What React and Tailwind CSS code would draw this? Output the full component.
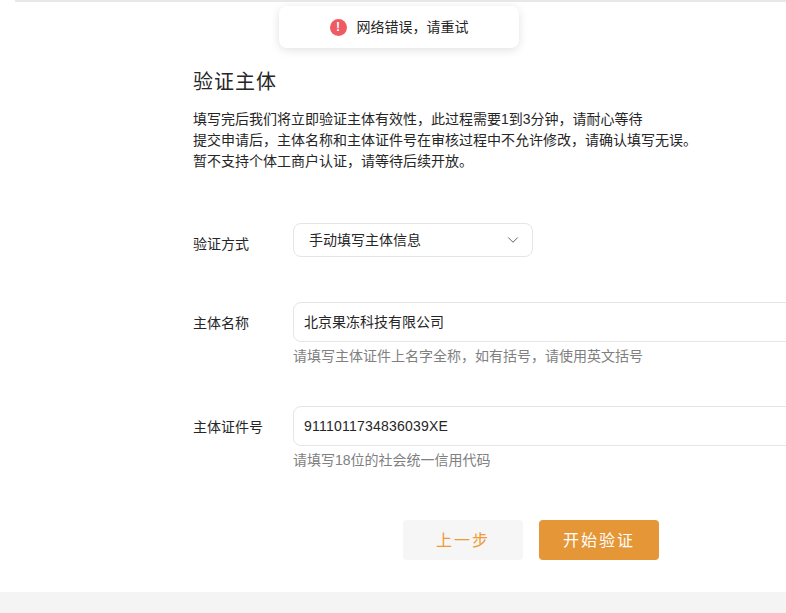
import React from 'react';
import { ChevronDown } from 'lucide-react';

const font = { fontFamily: '"Liberation Sans", "Noto Sans CJK SC", sans-serif' };

function Field({ label, value, hint }) {
  return (
    <div className="flex items-start">
      <div className="w-[100px] shrink-0 pt-[11px] text-[14px] leading-[20px] text-[#262626]">{label}</div>
      <div className="flex-1">
        <div className="flex h-[40px] w-[520px] items-center rounded-[8px] border border-[#e5e5e5] pl-[10px] text-[14px] text-[#262626]">
          {value}
        </div>
        <div className="mt-[5px] text-[14px] leading-[18px] text-[#808080]">{hint}</div>
      </div>
    </div>
  );
}

export default function App() {
  return (
    <div className="relative h-[613px] w-[786px] overflow-hidden bg-[#f4f4f4]" style={font}>
      <div className="h-[592px] bg-white">
        <div className="ml-[15px] h-[2px] bg-[#e8e8e8]" />

        <div className="pl-[193px] pt-[66px]">
          <h1 className="text-[20px] leading-[28px] font-normal tracking-[1px] text-[#262626]">验证主体</h1>
          <div className="mt-[13px] text-[14px] leading-[21px] text-[#262626]">
            <p>填写完后我们将立即验证主体有效性，此过程需要1到3分钟，请耐心等待</p>
            <p>提交申请后，主体名称和主体证件号在审核过程中不允许修改，请确认填写无误。</p>
            <p>暂不支持个体工商户认证，请等待后续开放。</p>
          </div>

          <div className="mt-[51px] flex items-start">
            <div className="w-[100px] shrink-0 pt-[11px] text-[14px] leading-[20px] text-[#262626]">验证方式</div>
            <div className="flex h-[34px] w-[240px] items-center justify-between rounded-[8px] border border-[#e5e5e5] pl-[15px] pr-[10px] text-[14px] text-[#262626]">
              <span>手动填写主体信息</span>
              <ChevronDown className="h-[18px] w-[18px] text-[#595959]" strokeWidth={1.25} />
            </div>
          </div>

          <div className="mt-[45px]">
            <Field label="主体名称" value="北京果冻科技有限公司" hint="请填写主体证件上名字全称，如有括号，请使用英文括号" />
          </div>
          <div className="mt-[41px]">
            <Field
              label="主体证件号"
              value={<span className="tracking-[0.22px]">9111011734836039XE</span>}
              hint="请填写18位的社会统一信用代码"
            />
          </div>

          <div className="mt-[51px] flex gap-[16px] pl-[210px]">
            <button type="button" className="h-[40px] w-[120px] rounded-[4px] bg-[#f6f6f6] pt-[2px] text-[16px] tracking-[2px] text-[#ef9a35]">上一步</button>
            <button type="button" className="h-[40px] w-[120px] rounded-[4px] bg-[#e59636] pt-[2px] text-[16px] tracking-[2px] text-white">开始验证</button>
          </div>
        </div>
      </div>

      <div className="absolute left-[279px] top-[6px] flex h-[42px] w-[240px] items-center justify-center gap-[10px] rounded-[8px] bg-white text-[14px] text-[#262626] shadow-[0_2px_10px_rgba(0,0,0,0.12)]">
        <span className="flex h-[17px] w-[17px] items-center justify-center rounded-full bg-[#ef5b62] text-[12px] leading-none font-bold text-white">!</span>
        <span>网络错误，请重试</span>
      </div>
    </div>
  );
}
